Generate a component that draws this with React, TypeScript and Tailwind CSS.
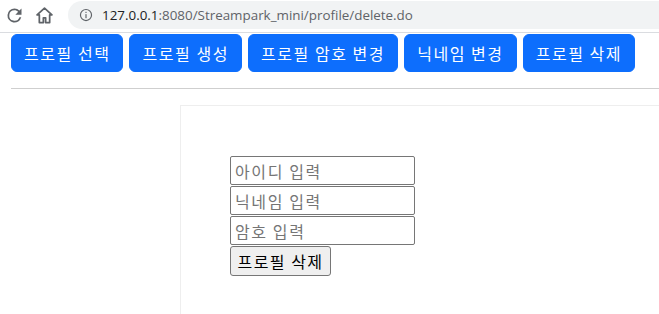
import React from "react";

const kr = { fontFamily: '"Noto Sans CJK KR", "Noto Sans", sans-serif' };

function NavButton({ label }: { label: string }) {
  return (
    <button
      className="h-[38px] px-[12px] rounded-[6px] bg-[#0d6efd] text-white text-[16px] leading-[24px] tracking-[1.55px] border border-[#0d6efd]"
      style={kr}
    >
      {label}
    </button>
  );
}

export default function App() {
  return (
    <div className="w-[659px] h-[314px] overflow-hidden bg-white relative">
      {/* Browser chrome */}
      <div className="h-[33px] bg-white border-b border-[#dadce0] flex items-start">
        <div className="flex items-center h-[30px] pl-[4px]">
          <svg width="21" height="21" viewBox="0 0 24 24">
            <path
              d="M17.65 6.35A7.958 7.958 0 0 0 12 4a8 8 0 1 0 7.73 10h-2.08A6 6 0 1 1 12 6c1.66 0 3.14.69 4.22 1.78L13 11h7V4l-2.35 2.35z"
              fill="#5f6368"
            />
          </svg>
          <svg width="21" height="21" viewBox="0 0 24 24" className="ml-[9px]">
            <path d="M12 3.5 3.5 11.2h2.6V20h4.6v-5.4h2.6V20h4.6v-8.8h2.6L12 3.5z" fill="none" stroke="#5f6368" strokeWidth="2" strokeLinejoin="round" />
          </svg>
        </div>
        <div className="ml-[13px] mt-[1px] h-[28px] flex-1 bg-[#f1f3f4] rounded-l-[14px] flex items-center pl-[11px]">
          <svg width="14" height="14" viewBox="0 0 24 24">
            <circle cx="12" cy="12" r="9.5" fill="none" stroke="#5f6368" strokeWidth="2" />
            <rect x="11" y="10.5" width="2" height="7" fill="#5f6368" />
            <rect x="11" y="6.5" width="2" height="2" fill="#5f6368" />
          </svg>
          <span
            className="ml-[9px] text-[13.4px] leading-[20px]"
            style={{ fontFamily: '"Open Sans", Roboto, sans-serif' }}
          >
            <span className="text-[#202124]">127.0.0.1</span>
            <span className="text-[#5f6368]">:8080/Streampark_mini/profile/delete.do</span>
          </span>
        </div>
      </div>

      {/* Page */}
      <div className="pl-[11px]">
        <div className="flex gap-[6px] pt-[1px]">
          <NavButton label="프로필 선택" />
          <NavButton label="프로필 생성" />
          <NavButton label="프로필 암호 변경" />
          <NavButton label="닉네임 변경" />
          <NavButton label="프로필 삭제" />
        </div>
        <div className="mt-[16px] h-px bg-[#cfcfcf]" />
        <div className="mt-[16px] ml-[169px] w-[600px] h-[260px] border border-[#eeeeee] pt-[50px] pl-[49px]">
          <div className="flex flex-col gap-[1px] items-start" style={kr}>
            {["아이디 입력", "닉네임 입력", "암호 입력"].map((p) => (
              <input
                key={p}
                placeholder={p}
                className="w-[185px] h-[29px] border border-[#767676] rounded-[2px] px-[4px] text-[16px] tracking-[1.6px] placeholder:text-[#757575] bg-white outline-none"
                style={kr}
              />
            ))}
            <button
              className="h-[30px] w-[101px] bg-[#efefef] border border-[#767676] rounded-[3px] text-[16px] leading-[20px] tracking-[1.5px] text-black"
              style={kr}
            >
              프로필 삭제
            </button>
          </div>
        </div>
      </div>
    </div>
  );
}
